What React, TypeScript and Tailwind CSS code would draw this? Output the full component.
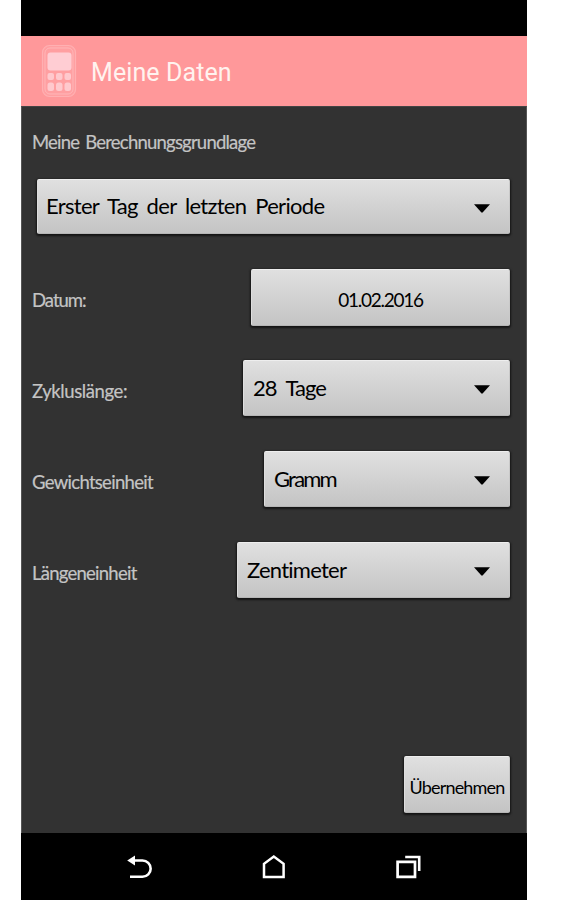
import React from 'react';

interface LabelProps {
  text: string;
  className: string;
}

interface FieldButtonProps {
  text: string;
  className: string;
  textClassName: string;
  dropdown?: boolean;
}

const Label: React.FC<LabelProps> = ({ text, className }) => (
  <span className={`whitespace-nowrap text-[18.5px] leading-6 text-[#c4c4c4] [-webkit-text-stroke:0.2px_#c4c4c4] ${className}`}>
    {text}
  </span>
);

const FieldButton: React.FC<FieldButtonProps> = ({ text, className, textClassName, dropdown }) => (
  <button
    className={`flex shrink-0 items-center rounded-[2px] border border-t-[#eeeeee] border-r-[#c9c9c9] border-b-[#b5b5b5] border-l-[#dedede] bg-linear-to-b from-[#e0e0e0] to-[#c4c4c4] text-black shadow-[0_1px_2px_1px_#151515] ${className}`}
  >
    <span className={`whitespace-nowrap ${textClassName}`}>{text}</span>
    {dropdown && (
      <svg className="mt-[3px] mr-[19px] ml-auto" width="16" height="9" viewBox="0 0 16 9">
        <path d="M0 0.3H16L8.8 8.3Q8 9 7.2 8.3Z" fill="#000" />
      </svg>
    )}
  </button>
);

const PhoneIcon = () => (
  <svg width="36" height="54" viewBox="0 0 36 54" fill="none">
    <rect x="1.5" y="1.5" width="33" height="51" rx="7" fill="#ff9fa1" stroke="#ffb0b2" strokeWidth="1.2" />
    <rect x="4" y="4" width="28" height="46" rx="5" stroke="#ffb6b8" strokeWidth="1" />
    <rect x="6.5" y="8.5" width="24" height="18" rx="3" fill="#ffcdd3" />
    {[6.5, 15, 23.5].map((x) => (
      <React.Fragment key={x}>
        <rect x={x} y="29" width="6.5" height="7" rx="2" fill="#ffc9cd" />
        <rect x={x} y="38.5" width="6.5" height="8.5" rx="2.5" fill="#ffc9cd" />
      </React.Fragment>
    ))}
  </svg>
);

const NavigationBar = () => (
  <nav className="flex h-[67px] shrink-0 items-center bg-black pl-[105px]">
    <svg width="28" height="28" viewBox="0 0 28 28" fill="none">
      <path d="M8 7.5H16.5A8 8 0 0 1 16.5 23.8H4" stroke="#fff" strokeWidth="2.6" />
      <path d="M1.2 7.5L9 2.6V12.4Z" fill="#fff" />
    </svg>
    <svg className="ml-[106px]" width="28" height="28" viewBox="0 0 28 28" fill="none">
      <path d="M4 24V10.8L13.8 3.6L23.6 10.8V24Z" stroke="#fff" strokeWidth="2.5" />
    </svg>
    <svg className="ml-[107px]" width="28" height="28" viewBox="0 0 28 28" fill="none">
      <path d="M2.6 8.8H20V23.9H2.6Z" stroke="#fff" strokeWidth="2.7" />
      <path d="M10.2 4H24.2V18" stroke="#fff" strokeWidth="2.6" />
    </svg>
  </nav>
);

const App: React.FC = () => {
  return (
    <div className="h-[900px] w-[584px] overflow-hidden bg-white pl-[21px]">
      <div className="flex h-full w-[506px] flex-col bg-[#323232]">
        <div className="h-9 shrink-0 bg-black" />
        <header className="flex h-[70px] shrink-0 items-center bg-[#ff989a] pl-5">
          <PhoneIcon />
          <h1 className="mt-[3px] ml-[14px] font-['Roboto'] text-[25px] leading-8 tracking-[0.1px] text-[#fff3ef]">
            Meine Daten
          </h1>
        </header>

        <main className="flex grow flex-col border-x border-t border-x-[#555555] border-t-[#444444] pr-4 pl-[10px] font-['Lato',sans-serif]">
          <Label text="Meine Berechnungsgrundlage" className="mt-[23px] tracking-[-0.78px] [word-spacing:2px]" />
          <FieldButton
            text="Erster Tag der letzten Periode"
            className="mt-[25px] ml-[5px] h-[55px] pl-2"
            textClassName="mb-[2px] text-[22px] tracking-[-0.7px] [word-spacing:4px]"
            dropdown
          />
          <div className="mt-[35px] flex h-[57px] items-center justify-between">
            <Label text="Datum:" className="mt-[5px] tracking-[-1px]" />
            <FieldButton
              text="01.02.2016"
              className="h-[57px] w-[259px] justify-center"
              textClassName="mt-[5px] text-[19px] tracking-[-1.25px]"
            />
          </div>
          <div className="mt-[34px] flex h-[56px] items-center justify-between">
            <Label text="Zykluslänge:" className="mt-[5px] tracking-[-0.4px]" />
            <FieldButton
              text="28 Tage"
              className="h-[56px] w-[267px] pl-[9px]"
              textClassName="mb-[2px] text-[22px] tracking-[-1px] [word-spacing:5px]"
              dropdown
            />
          </div>
          <div className="mt-[35px] flex h-[56px] items-center justify-between">
            <Label text="Gewichtseinheit" className="mt-[5px] tracking-[-0.7px]" />
            <FieldButton
              text="Gramm"
              className="h-[56px] w-[246px] pl-[9px]"
              textClassName="mb-[2px] text-[22px] tracking-[-1.8px]"
              dropdown
            />
          </div>
          <div className="mt-[35px] flex h-[56px] items-center justify-between">
            <Label text="Längeneinheit" className="mt-[5px] tracking-[-0.75px]" />
            <FieldButton
              text="Zentimeter"
              className="h-[56px] w-[273px] pl-[9px]"
              textClassName="mb-[2px] text-[22px] tracking-[-0.75px]"
              dropdown
            />
          </div>
          <FieldButton
            text="Übernehmen"
            className="mt-auto mb-5 h-[57px] w-[106px] justify-center self-end"
            textClassName="mt-[5px] text-[18px] tracking-[-0.8px]"
          />
        </main>

        <NavigationBar />
      </div>
    </div>
  );
};

export default App;
